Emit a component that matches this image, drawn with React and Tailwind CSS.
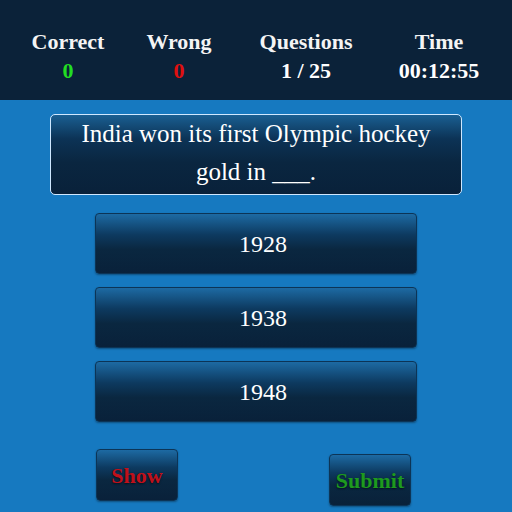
import React from "react";

const stats = [
  { label: "Correct", value: "0", color: "text-[#22dd22]", pos: "ml-[13px]" },
  { label: "Wrong", value: "0", color: "text-[#e01010]", pos: "ml-[1px]" },
  { label: "Questions", value: "1 / 25", color: "text-white", pos: "ml-[17px]" },
  { label: "Time", value: "00:12:55", color: "text-white", pos: "ml-[23px]" },
];

const answers = ["1928", "1938", "1948"];

const btn =
  "bg-[linear-gradient(to_bottom,#1d6aa3_0%,#0d3a60_35%,#0a2740_60%,#09213a_100%)] border border-[#0c3456] rounded-[4px] shadow-[0_1px_2px_rgba(0,0,0,0.35)]";

export default function App() {
  return (
    <div className="w-[512px] h-[512px] bg-[#1679c0] font-['Liberation_Serif',serif] overflow-hidden">
      <div className="h-[100px] bg-[#0b2239] flex items-center pt-[12px]">
        {stats.map((s) => (
          <div
            key={s.label}
            className={`${s.pos} w-[110px] flex flex-col items-center font-bold text-[22px] leading-[29px]`}
          >
            <span className="text-[#f4f4f4]">{s.label}</span>
            <span className={s.color}>{s.value}</span>
          </div>
        ))}
      </div>

      <div className="mx-[50px] mt-[14px] h-[81px] rounded-[5px] border border-[#cfe8ff] bg-[linear-gradient(to_bottom,#1a5f92_0%,#0c3356_30%,#0a2640_60%,#09213a_100%)] flex items-center justify-center text-center text-white text-[25px] leading-[38px] px-2 pb-[3px]">
        India won its first Olympic hockey gold in ___.
      </div>

      <div className="flex flex-col items-center gap-[13px] mt-[18px]">
        {answers.map((a) => (
          <div
            key={a}
            className={`${btn} w-[322px] h-[61px] flex items-center justify-center pl-[14px] text-white text-[24px]`}
          >
            {a}
          </div>
        ))}
      </div>

      <div className="flex items-start pl-[96px] gap-[151px] mt-[27px]">
        <div className={`${btn} w-[82px] h-[52px] flex items-center justify-center font-bold text-[22px] text-[#c0101a] [text-shadow:0_1px_2px_rgba(0,0,0,0.6)]`}>
          Show
        </div>
        <div className={`${btn} w-[82px] h-[52px] mt-[5px] flex items-center justify-center font-bold text-[22px] text-[#1e9a1e] [text-shadow:0_1px_2px_rgba(0,0,0,0.6)]`}>
          Submit
        </div>
      </div>
    </div>
  );
}
